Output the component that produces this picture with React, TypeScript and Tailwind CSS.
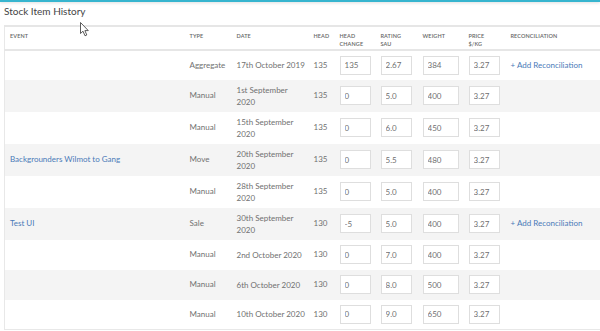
import React from "react"

interface HistoryRow {
    event?: string
    type: string
    date: string[]
    head: number
    change: string
    rating: string
    weight: string
    price: string
    reconcile?: boolean
}

const rows: HistoryRow[] = [
    { type: "Aggregate", date: ["17th October 2019"], head: 135, change: "135", rating: "2.67", weight: "384", price: "3.27", reconcile: true },
    { type: "Manual", date: ["1st September", "2020"], head: 135, change: "0", rating: "5.0", weight: "400", price: "3.27" },
    { type: "Manual", date: ["15th September", "2020"], head: 135, change: "0", rating: "6.0", weight: "450", price: "3.27" },
    { event: "Backgrounders Wilmot to Gang", type: "Move", date: ["20th September", "2020"], head: 135, change: "0", rating: "5.5", weight: "480", price: "3.27" },
    { type: "Manual", date: ["28th September", "2020"], head: 135, change: "0", rating: "5.0", weight: "400", price: "3.27" },
    { event: "Test UI", type: "Sale", date: ["30th September", "2020"], head: 130, change: "-5", rating: "5.0", weight: "400", price: "3.27", reconcile: true },
    { type: "Manual", date: ["2nd October 2020"], head: 130, change: "0", rating: "7.0", weight: "400", price: "3.27" },
    { type: "Manual", date: ["6th October 2020"], head: 130, change: "0", rating: "8.0", weight: "500", price: "3.27" },
    { type: "Manual", date: ["10th October 2020"], head: 130, change: "0", rating: "9.0", weight: "650", price: "3.27" },
]

function Cell({ value, width }: { value: string; width: string }) {
    return (
        <input
            readOnly
            value={value}
            className={`${width} block h-[19px] border border-[#dedede] bg-white pl-[4px] text-[8px] text-[#707070] outline-none`}
        />
    )
}

function Cursor() {
    return (
        <svg className="absolute left-[80px] top-[22px]" width="10" height="15" viewBox="0 0 10 15">
            <path d="M0.5 0.5 L0.5 11.5 L3 9.2 L5 13.8 L6.8 13 L4.9 8.6 L8.3 8.6 Z" fill="#fff" stroke="#333" strokeWidth="0.8" strokeLinejoin="round" />
        </svg>
    )
}

export default function App() {
    const th = "px-[5px] pt-[5px] align-top text-left font-semibold text-[5.5px] leading-[8px] uppercase text-[#666] tracking-[0.02em]"
    const td = "px-[5px] py-0 align-middle"

    return (
        <div className="relative w-[600px] h-[331px] overflow-hidden bg-white" style={{ fontFamily: "Lato, 'Open Sans', sans-serif" }}>
            <div className="h-[1.5px] bg-[#37b5cf] shadow-[0_1px_3px_rgba(0,0,0,0.15)]" />
            <div className="pl-[4px] pt-[2px] mb-[7px] text-[10px] leading-[14px] text-[#444]">Stock Item History</div>

            <table className="ml-[4px] w-[620px] table-fixed border-collapse border-l border-[#e8e8e8] text-[8px] leading-[11px] text-[#707070]">
                <thead>
                    <tr className="h-[24px] border-t-2 border-b-2 border-[#e6e6e6]">
                        <th className={`${th} w-[180px]`}>Event</th>
                        <th className={`${th} w-[47px]`}>Type</th>
                        <th className={`${th} w-[77px]`}>Date</th>
                        <th className={`${th} w-[26px]`}>Head</th>
                        <th className={`${th} w-[41px]`}>Head<br />Change</th>
                        <th className={`${th} w-[42px]`}>Rating<br />SAU</th>
                        <th className={`${th} w-[46px]`}>Weight</th>
                        <th className={`${th} w-[42px]`}>Price<br />$/kg</th>
                        <th className={`${th} w-[119px]`}>Reconciliation</th>
                    </tr>
                </thead>
                <tbody>
                    {rows.map((row, i) => (
                        <tr
                            key={i}
                            className={`${row.date.length > 1 ? "h-[32px]" : "h-[30px]"} ${i % 2 === 1 ? "bg-[#f4f4f4]" : "bg-white"} ${i === rows.length - 1 ? "border-b border-[#e8e8e8]" : ""}`}
                        >
                            <td className={`${td} text-[#4a7ab8] whitespace-nowrap`}>{row.event}</td>
                            <td className={td}>{row.type}</td>
                            <td className={`${td} leading-[12px] whitespace-nowrap`}>
                                {row.date.map((line, j) => (
                                    <div key={j}>{line}</div>
                                ))}
                            </td>
                            <td className={td}>{row.head}</td>
                            <td className={td}><Cell value={row.change} width="w-[31px]" /></td>
                            <td className={td}><Cell value={row.rating} width="w-[31px]" /></td>
                            <td className={td}><Cell value={row.weight} width="w-[36px]" /></td>
                            <td className={td}><Cell value={row.price} width="w-[31px]" /></td>
                            <td className={`${td} text-[#4a7ab8] whitespace-nowrap`}>{row.reconcile ? "+ Add Reconciliation" : ""}</td>
                        </tr>
                    ))}
                </tbody>
            </table>

            <Cursor />
        </div>
    )
}
